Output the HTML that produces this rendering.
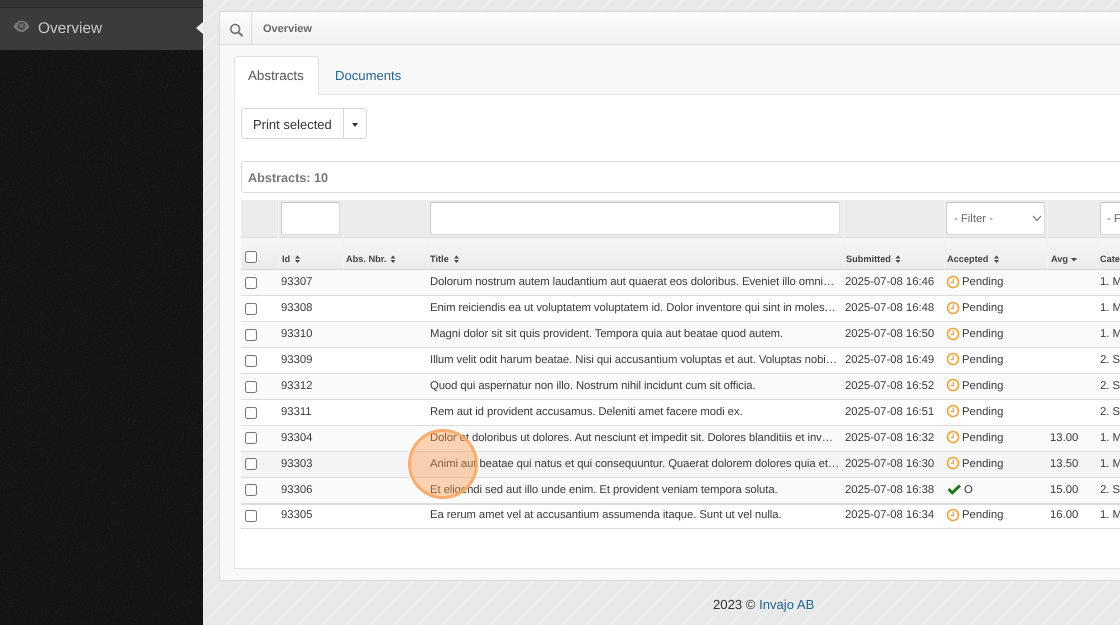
<!DOCTYPE html>
<html><head><meta charset="utf-8">
<style>
html,body{margin:0;padding:0}
body{width:1120px;height:625px;overflow:hidden;position:relative;background:#e9e9e9;font-family:"Liberation Sans",sans-serif;color:#333;text-rendering:geometricPrecision}
.a{position:absolute;white-space:nowrap}
.t{font-size:11.3px;line-height:14px;color:#3a3a3a}
.g{letter-spacing:-.075px}
.h{font-size:9.2px;font-weight:bold;line-height:12px;color:#444;top:253px}
.c{position:absolute;left:245px;width:10px;height:10px;border:1px solid #777;border-radius:2.5px;background:#fff}
.l{position:absolute;left:241px;width:879px;height:1px;background:#dcdcdc}
.s{position:absolute;left:241px;width:879px;background:#fafafa}
.f{position:absolute;background:#fff;border:1px solid #dcdcdc;border-top-color:#c4c4c4;border-left-color:#cccccc;border-radius:2px;box-sizing:border-box;height:33px;top:202px}
.fb{position:absolute;background:#ebebeb;top:200px;height:37px}
.v{position:absolute;top:200px;width:1px;height:69px;background:#f2f2f2}
</style></head><body>
<svg class="a" style="left:203px;top:0" width="917" height="625"><defs><pattern id="p" width="24" height="24" patternUnits="userSpaceOnUse"><path d="M0 24L24 0" stroke="#f0f0f0" stroke-width=".9"/><path d="M-6 12L6 0M18 30L30 18" stroke="#e4e4e4" stroke-width=".7"/></pattern></defs><rect width="917" height="625" fill="#e9e9e9"/><rect width="917" height="625" fill="url(#p)"/></svg>

<!-- sidebar -->
<svg class="a" style="left:0;top:0" width="203" height="625"><defs><filter id="n" x="0" y="0" width="100%" height="100%"><feTurbulence type="fractalNoise" baseFrequency="0.7" numOctaves="2" seed="3"/><feColorMatrix values="0 0 0 0 1  0 0 0 0 1  0 0 0 0 1  0.5 0 0 0 -0.17"/></filter></defs><rect width="203" height="625" fill="#121212"/><rect width="203" height="625" filter="url(#n)" opacity=".14"/></svg>
<div class="a" style="left:0;top:0;width:203px;height:7px;background:#343434"></div>
<div class="a" style="left:0;top:7px;width:203px;height:1px;background:#2a2a2a"></div>
<div class="a" style="left:0;top:8px;width:203px;height:42px;background:#3b3b3b"></div>
<svg class="a" style="left:13px;top:19px" width="17" height="15" viewBox="0 0 17 15"><path d="M0.500 7.500C3 3 6 1.500 8.500 1.500S14 3 16.500 7.500C14 11.500 11 13 8.500 13S3 11.500 0.500 7.500Z" fill="#777"/><circle cx="8.500" cy="6.800" r="3.900" fill="#454545"/><circle cx="8.500" cy="6.600" r="2.400" fill="#6c6c6c"/></svg>
<div class="a" style="left:38px;top:19px;font-size:15.400px;line-height:20px;color:#c8c8c8">Overview</div>
<div class="a" style="left:196px;top:22px;width:0;height:0;border:6px solid transparent;border-left:0;border-right:7px solid #efefef"></div>

<!-- panel -->
<div class="a" style="left:219px;top:11px;width:901px;height:570px;background:#f8f8f8;border:1px solid #dadada;border-right:0;box-sizing:border-box"></div>
<div class="a" style="left:220px;top:12px;width:900px;height:32px;background:linear-gradient(#fbfbfb,#f1f1f1);border-bottom:1px solid #dcdcdc"></div>
<div class="a" style="left:251px;top:12px;width:1px;height:32px;background:#ddd"></div>
<svg class="a" style="left:229px;top:22px" width="15" height="15" viewBox="0 0 15 15"><circle cx="6.200" cy="6.900" r="4.400" fill="none" stroke="#707070" stroke-width="1.600"/><path d="M9.500 10.200L13 13.700" stroke="#707070" stroke-width="2" stroke-linecap="round"/></svg>
<div class="a" style="left:263px;top:22px;font-size:11px;font-weight:bold;line-height:15px;color:#666">Overview</div>

<div class="a" style="left:234px;top:94px;width:886px;height:475px;background:#fff;border:1px solid #e4e4e4;border-right:0;box-sizing:border-box"></div>
<div class="a" style="left:234px;top:56px;width:85px;height:39px;background:#fff;border:1px solid #e2e2e2;border-bottom:0;border-radius:3px 3px 0 0;box-sizing:border-box"></div>
<div class="a" style="left:248px;top:68px;font-size:13.400px;line-height:16px;color:#555">Abstracts</div>
<div class="a" style="left:335px;top:68px;font-size:13.100px;line-height:16px;color:#23648f">Documents</div>

<div class="a" style="left:241px;top:108px;width:126px;height:31px;background:#fff;border:1px solid #d8d8d8;border-radius:3px;box-sizing:border-box"></div>
<div class="a" style="left:343px;top:108px;width:1px;height:31px;background:#d8d8d8"></div>
<div class="a" style="left:253px;top:117px;font-size:13px;line-height:16px;color:#333">Print selected</div>
<div class="a" style="left:352px;top:123px;width:0;height:0;border:3.500px solid transparent;border-bottom:0;border-top:4px solid #333"></div>

<div class="a" style="left:241px;top:161px;width:879px;height:32px;background:#fff;border:1px solid #ddd;border-right:0;border-radius:3px 0 0 3px;box-sizing:border-box"></div>
<div class="a" style="left:248px;top:170px;font-size:12.650px;font-weight:bold;line-height:16px;color:#777">Abstracts: 10</div>

<!-- filter row -->
<div class="fb" style="left:241px;width:879px"></div>
<div class="a" style="left:241px;top:237px;width:879px;height:33px;background:linear-gradient(#f6f6f6,#ebebeb);border-top:1px solid #dcdcdc;box-sizing:border-box"></div>
<div class="a" style="left:241px;top:269px;width:879px;height:1px;background:#d6d6d6"></div>
<div class="v" style="left:278px"></div><div class="v" style="left:343px"></div><div class="v" style="left:427px"></div><div class="v" style="left:843px"></div><div class="v" style="left:944px"></div><div class="v" style="left:1047px"></div><div class="v" style="left:1097px"></div>
<div class="f" style="left:281px;width:59px"></div>
<div class="f" style="left:430px;width:410px"></div>
<div class="f" style="left:946px;width:99px"></div>
<div class="f" style="left:1100px;width:30px"></div>
<div class="a" style="left:954px;top:212px;font-size:11.300px;line-height:14px;color:#666">- Filter -</div>
<svg class="a" style="left:1032px;top:215px" width="10" height="7" viewBox="0 0 10 7"><path d="M1 1L5 5.500L9 1" fill="none" stroke="#666" stroke-width="1"/></svg>
<div class="a" style="left:1107px;top:212px;font-size:11.300px;line-height:14px;color:#666">- F</div>

<!-- headers -->
<div class="c" style="top:251px"></div>
<div class="a h" style="left:282px">Id</div>
<div class="a h" style="left:346px">Abs. Nbr.</div>
<div class="a h" style="left:430px">Title</div>
<div class="a h" style="left:846px">Submitted</div>
<div class="a h" style="left:947px">Accepted</div>
<div class="a h" style="left:1051px">Avg</div>
<div class="a h" style="left:1100px">Cate</div>
<svg class="a" style="left:0;top:0" width="1120" height="270"><g fill="#444"><path d="M295 258.500l2.500-3 2.500 3zM295 260l2.500 3 2.500-3z"/><path d="M390.500 258.500l2.500-3 2.500 3zM390.500 260l2.500 3 2.500-3z"/><path d="M454 258.500l2.500-3 2.500 3zM454 260l2.500 3 2.500-3z"/><path d="M895.500 258.500l2.500-3 2.500 3zM895.500 260l2.500 3 2.500-3z"/><path d="M994 258.500l2.500-3 2.500 3zM994 260l2.500 3 2.500-3z"/><path d="M1071 258l3 3.500 3-3.500z"/></g></svg>

<!-- row stripes -->
<div class="s" style="top:270px;height:25px"></div>
<div class="s" style="top:322px;height:25px"></div>
<div class="s" style="top:374px;height:25px"></div>
<div class="s" style="top:426px;height:25px"></div>
<div class="a" style="left:241px;top:452px;width:879px;height:25px;background:#f4f4f4"></div>
<div class="s" style="top:478px;height:25px"></div>
<div class="l" style="top:295px"></div><div class="l" style="top:321px"></div><div class="l" style="top:347px"></div><div class="l" style="top:373px"></div><div class="l" style="top:399px"></div><div class="l" style="top:425px"></div><div class="l" style="top:451px"></div><div class="l" style="top:477px"></div><div class="l" style="top:503px;height:2px"></div><div class="l" style="top:528px"></div>

<!-- checkboxes -->
<div class="c" style="top:277px"></div><div class="c" style="top:303px"></div><div class="c" style="top:329px"></div><div class="c" style="top:355px"></div><div class="c" style="top:381px"></div><div class="c" style="top:407px"></div><div class="c" style="top:432px"></div><div class="c" style="top:458px"></div><div class="c" style="top:484px"></div><div class="c" style="top:510px"></div>

<!-- ids -->
<div class="a t" style="left:281px;top:275px">93307</div>
<div class="a t" style="left:281px;top:301px">93308</div>
<div class="a t" style="left:281px;top:327px">93310</div>
<div class="a t" style="left:281px;top:353px">93309</div>
<div class="a t" style="left:281px;top:379px">93312</div>
<div class="a t" style="left:281px;top:405px">93311</div>
<div class="a t" style="left:281px;top:431px">93304</div>
<div class="a t" style="left:281px;top:457px">93303</div>
<div class="a t" style="left:281px;top:483px">93306</div>
<div class="a t" style="left:281px;top:508px">93305</div>

<!-- titles -->
<div class="a t g" style="left:430px;top:275px">Dolorum nostrum autem laudantium aut quaerat eos doloribus. Eveniet illo omni…</div>
<div class="a t g" style="left:430px;top:301px">Enim reiciendis ea ut voluptatem voluptatem id. Dolor inventore qui sint in moles…</div>
<div class="a t g" style="left:430px;top:327px">Magni dolor sit sit quis provident. Tempora quia aut beatae quod autem.</div>
<div class="a t g" style="left:430px;top:353px">Illum velit odit harum beatae. Nisi qui accusantium voluptas et aut. Voluptas nobi…</div>
<div class="a t g" style="left:430px;top:379px">Quod qui aspernatur non illo. Nostrum nihil incidunt cum sit officia.</div>
<div class="a t g" style="left:430px;top:405px">Rem aut id provident accusamus. Deleniti amet facere modi ex.</div>
<div class="a t g" style="left:430px;top:431px">Dolor et doloribus ut dolores. Aut nesciunt et impedit sit. Dolores blanditiis et inv…</div>
<div class="a t g" style="left:430px;top:457px">Animi aut beatae qui natus et qui consequuntur. Quaerat dolorem dolores quia et…</div>
<div class="a t g" style="left:430px;top:483px">Et eligendi sed aut illo unde enim. Et provident veniam tempora soluta.</div>
<div class="a t g" style="left:430px;top:508px">Ea rerum amet vel at accusantium assumenda itaque. Sunt ut vel nulla.</div>

<!-- dates -->
<div class="a t" style="left:845px;top:275px">2025-07-08 16:46</div>
<div class="a t" style="left:845px;top:301px">2025-07-08 16:48</div>
<div class="a t" style="left:845px;top:327px">2025-07-08 16:50</div>
<div class="a t" style="left:845px;top:353px">2025-07-08 16:49</div>
<div class="a t" style="left:845px;top:379px">2025-07-08 16:52</div>
<div class="a t" style="left:845px;top:405px">2025-07-08 16:51</div>
<div class="a t" style="left:845px;top:431px">2025-07-08 16:32</div>
<div class="a t" style="left:845px;top:457px">2025-07-08 16:30</div>
<div class="a t" style="left:845px;top:483px">2025-07-08 16:38</div>
<div class="a t" style="left:845px;top:508px">2025-07-08 16:34</div>

<!-- status -->
<svg width="0" height="0" style="position:absolute"><defs><g id="k"><circle cx="7" cy="7" r="5.500" fill="#fdfaf3" stroke="#e8a63f" stroke-width="1.600"/><path d="M7.300 3.600V7.500H4.600" fill="none" stroke="#e8a63f" stroke-width="1.200"/></g></defs></svg>
<svg class="a" style="left:946px;top:275px" width="14" height="14"><use href="#k"/></svg><div class="a t" style="left:962px;top:275px">Pending</div>
<svg class="a" style="left:946px;top:300.500px" width="14" height="14"><use href="#k"/></svg><div class="a t" style="left:962px;top:301px">Pending</div>
<svg class="a" style="left:946px;top:326.500px" width="14" height="14"><use href="#k"/></svg><div class="a t" style="left:962px;top:327px">Pending</div>
<svg class="a" style="left:946px;top:352px" width="14" height="14"><use href="#k"/></svg><div class="a t" style="left:962px;top:353px">Pending</div>
<svg class="a" style="left:946px;top:378px" width="14" height="14"><use href="#k"/></svg><div class="a t" style="left:962px;top:379px">Pending</div>
<svg class="a" style="left:946px;top:404px" width="14" height="14"><use href="#k"/></svg><div class="a t" style="left:962px;top:405px">Pending</div>
<svg class="a" style="left:946px;top:430px" width="14" height="14"><use href="#k"/></svg><div class="a t" style="left:962px;top:431px">Pending</div>
<svg class="a" style="left:946px;top:456px" width="14" height="14"><use href="#k"/></svg><div class="a t" style="left:962px;top:457px">Pending</div>
<svg class="a" style="left:947px;top:482px" width="14" height="14" viewBox="0 0 14 14"><path d="M1.500 7L5.300 10.800L13 3.500" fill="none" stroke="#1c7a1c" stroke-width="3"/></svg><div class="a t" style="left:964px;top:483px">O</div>
<svg class="a" style="left:946px;top:507.500px" width="14" height="14"><use href="#k"/></svg><div class="a t" style="left:962px;top:508px">Pending</div>

<!-- avg -->
<div class="a t" style="left:1050px;top:431px">13.00</div>
<div class="a t" style="left:1050px;top:457px">13.50</div>
<div class="a t" style="left:1050px;top:483px">15.00</div>
<div class="a t" style="left:1050px;top:508px">16.00</div>

<!-- category -->
<div class="a t" style="left:1100px;top:275px">1. M</div>
<div class="a t" style="left:1100px;top:301px">1. M</div>
<div class="a t" style="left:1100px;top:327px">1. M</div>
<div class="a t" style="left:1100px;top:353px">2. S</div>
<div class="a t" style="left:1100px;top:379px">2. S</div>
<div class="a t" style="left:1100px;top:405px">2. S</div>
<div class="a t" style="left:1100px;top:431px">1. M</div>
<div class="a t" style="left:1100px;top:457px">1. M</div>
<div class="a t" style="left:1100px;top:483px">2. S</div>
<div class="a t" style="left:1100px;top:508px">1. M</div>

<!-- highlight -->
<div class="a" style="left:408px;top:429px;width:70px;height:70px;border-radius:50%;box-sizing:border-box;background:rgba(253,150,70,.4);border:3px solid rgba(249,170,105,.95)"></div>

<!-- footer -->
<div class="a" style="left:713px;top:597px;font-size:13.100px;line-height:16px;color:#333">2023 © <span style="color:#23648f">Invajo AB</span></div>
</body></html>
